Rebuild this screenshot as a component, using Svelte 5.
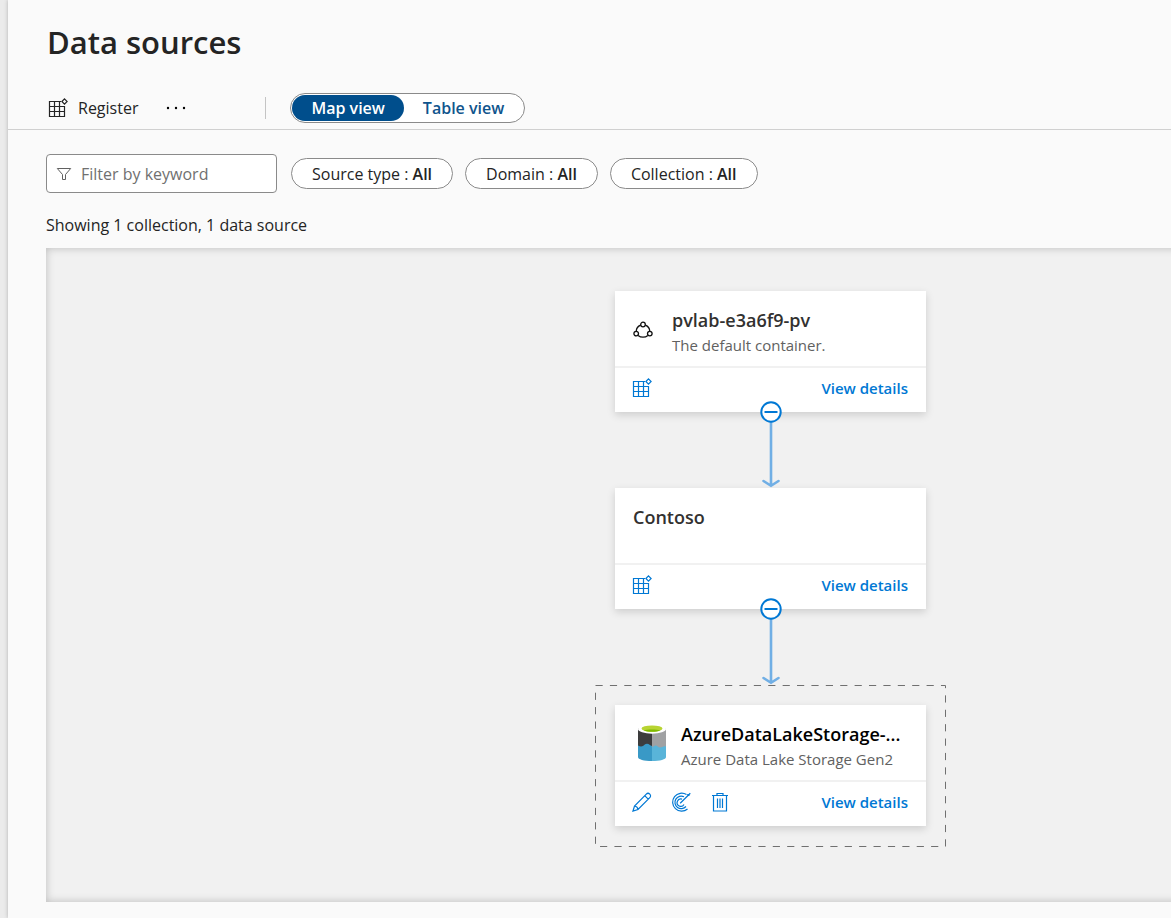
<script>
  let view = $state('map');
  let keyword = $state('');
  const filters = ['Source type', 'Domain', 'Collection'];
</script>

{#snippet gridIcon()}
  <svg class="icon" viewBox="0 0 20 20" width="20" height="20" aria-hidden="true">
    <path d="M13 3.500H1.500v15h15V8M6.500 3.500v15M11.500 3.500v15M1.500 8.500h15M1.500 13.500h15" />
    <path d="M16.500 .9l2.600 2.600-2.600 2.600-2.600-2.600z" />
  </svg>
{/snippet}

{#snippet connector()}
  <div class="connector">
    <svg class="arrow" viewBox="0 0 22 77" width="22" height="77" aria-hidden="true">
      <path d="M11 8v65M3.500 69l7.500 4.800 7.500-4.800" />
    </svg>
    <button class="collapse" aria-label="Collapse">
      <svg viewBox="0 0 22 22" width="22" height="22" aria-hidden="true">
        <circle cx="11" cy="11" r="9.700" />
        <path d="M4.500 11h13" />
      </svg>
    </button>
  </div>
{/snippet}

<main>
  <h1>Data sources</h1>

  <div class="toolbar">
    <button class="register">{@render gridIcon()}<span>Register</span></button>
    <button class="more" aria-label="More">
      <svg viewBox="0 0 20 4" width="20" height="4" aria-hidden="true">
        <circle cx="2" cy="2" r="1.200" /><circle cx="10" cy="2" r="1.200" /><circle cx="18" cy="2" r="1.200" />
      </svg>
    </button>
    <span class="separator"></span>
    <div class="switch">
      <button class:active={view === 'map'} onclick={() => (view = 'map')}>Map view</button>
      <button class:active={view === 'table'} onclick={() => (view = 'table')}>Table view</button>
    </div>
  </div>

  <div class="filters">
    <label class="search">
      <svg viewBox="0 0 16 16" width="16" height="16" aria-hidden="true">
        <path d="M1.300 2.500h13.400L9.500 8.500v5h-3v-5z" />
      </svg>
      <input type="text" placeholder="Filter by keyword" aria-label="Filter by keyword" bind:value={keyword} />
    </label>
    <div class="pills">
      {#each filters as name}
        <button class="pill">{name} : <b>All</b></button>
      {/each}
    </div>
  </div>

  <p class="summary">Showing 1 collection, 1 data source</p>

  <section class="canvas">
    <div class="tree">
      <article class="card">
        <header>
          <svg class="container-icon" viewBox="0 0 20 18" width="20" height="18" aria-hidden="true">
            <circle cx="10" cy="3.500" r="2.300" /><circle cx="3.200" cy="12.600" r="2.300" /><circle cx="16.800" cy="12.600" r="2.300" />
            <path d="M7.600 4.100C5 5.200 3.400 7.500 3.300 10M12.400 4.100C15 5.200 16.600 7.500 16.700 10M5.100 14.400c2.800 2.400 7 2.400 9.800 0" />
          </svg>
          <div class="names"><h2>pvlab-e3a6f9-pv</h2><p>The default container.</p></div>
        </header>
        <footer>
          <button aria-label="Register">{@render gridIcon()}</button>
          <a href="#details">View details</a>
        </footer>
      </article>
      {@render connector()}
      <article class="card">
        <header><div class="names"><h2>Contoso</h2></div></header>
        <footer>
          <button aria-label="Register">{@render gridIcon()}</button>
          <a href="#details">View details</a>
        </footer>
      </article>
      {@render connector()}
      <div class="group">
        <svg class="outline" aria-hidden="true"><rect x="0.500" y="0.500" width="350" height="161" pathLength="142" /></svg>
        <article class="card source">
          <header>
            <svg viewBox="0 0 28 36" width="28" height="36" aria-hidden="true">
              <path fill="#3c3c3d" d="M0 3.500h14V24H0z" />
              <path fill="#a0a1a3" d="M14 3.500h14V24H14z" />
              <path fill="#3999c6" d="M0 20.500c2 1 3.500 1.200 5 .4 1.500-.7 2-2.100 4-2.100 2.200 0 3 2 5 2.200V36C6 36 0 34.500 0 32z" />
              <path fill="#59b4d9" d="M14 22c1.500 0 2-1.500 3.500-1.500 2 0 2.500 2 4.500 2 2.500 0 3.500-2 6-1V32c0 2.500-6 4-14 4z" />
              <ellipse cx="14" cy="4" rx="14" ry="4.700" fill="#fff" />
              <ellipse cx="14" cy="3.600" rx="10.500" ry="3.200" fill="#b8d432" />
              <path fill="#7fba00" d="M5.500 5.500C10 4.200 18 4.200 22.500 5.500 19 7.300 9 7.300 5.500 5.500z" />
            </svg>
            <div class="names"><h2>AzureDataLakeStorage-...</h2><p>Azure Data Lake Storage Gen2</p></div>
          </header>
          <footer>
            <button aria-label="Edit">
              <svg class="icon" viewBox="0 0 20 20" width="20" height="20" aria-hidden="true">
                <path d="M1 19l1.500-5L14.300 2.100c2.300-2.300 5.800 1.200 3.500 3.500L6 17.500zM2.500 14c2 .2 3.300 1.500 3.500 3.500M12.700 3.700l3.500 3.500" />
              </svg>
            </button>
            <button aria-label="Scan">
              <svg class="icon" viewBox="0 0 20 20" width="20" height="20" aria-hidden="true">
                <path d="M15.500 2.600A9 9 0 1 0 16.500 17M13 4.700A6.300 6.300 0 1 0 15 14.500M11 7.100A3.700 3.700 0 1 0 13 12.500M9.200 11.200L19.300 1.200M16.800 2v1.500h1.700" />
              </svg>
            </button>
            <button aria-label="Delete">
              <svg class="icon" viewBox="0 0 20 20" width="20" height="20" aria-hidden="true">
                <path d="M2 3.500h16M7 3.500v-2h6v2M3.500 3.500v15.500h13V3.500M7.500 6.500v9.500M10 6.500v9.500M12.500 6.500v9.500" />
              </svg>
            </button>
            <a href="#details">View details</a>
          </footer>
        </article>
      </div>
    </div>
  </section>
</main>

<style>
  :global(body) {
    margin: 0;
    background: #ebebeb;
    font-family: "Segoe UI", "Open Sans", "Noto Sans", sans-serif;
    font-size: 16px;
    color: #242424;
  }
  main {
    box-sizing: border-box;
    min-height: 100vh;
    margin-left: 8px;
    padding-bottom: 16px;
    display: flex;
    flex-direction: column;
    background: #fafafa;
    box-shadow: 0 0 4px #00000040;
    overflow: hidden;
  }
  h1, h2, p { margin: 0; font-weight: 400; }
  button {
    font: inherit;
    color: inherit;
    padding: 0;
    border: 0;
    background: none;
    cursor: pointer;
  }
  svg { display: block; flex: none; }
  .icon { fill: none; stroke: currentColor; stroke-width: 1.2; }

  h1 {
    padding: 20px 0 0 39px;
    font-size: 31px;
    line-height: 44px;
    font-weight: 600;
  }
  .toolbar {
    display: flex;
    align-items: center;
    height: 43px;
    margin-top: 22px;
    padding-left: 40px;
    border-bottom: 1px solid #d0d0d0;
  }
  .register { display: flex; align-items: center; gap: 10px; }
  .more { margin-left: 28px; }
  .separator { width: 1px; height: 22px; margin: 0 24px 0 79px; background: #c4c4c4; }
  .switch {
    display: flex;
    box-sizing: border-box;
    height: 30px;
    padding: 1px;
    border: 1px solid #8a8a8a;
    border-radius: 15px;
    background: #fff;
  }
  .switch button {
    padding: 0 19px;
    border-radius: 13px;
    font-weight: 600;
    line-height: 26px;
    color: #0f548c;
  }
  .switch .active { background: #004e8c; color: #fff; }

  .filters { display: flex; align-items: center; gap: 14px; padding: 24px 0 0 38px; }
  .search {
    display: flex;
    align-items: center;
    gap: 9px;
    box-sizing: border-box;
    width: 231px;
    height: 39px;
    padding: 0 9px;
    border: 1px solid #8a8a8a;
    border-radius: 4px;
    background: #fff;
  }
  .search svg { fill: none; stroke: #616161; }
  .search input {
    flex: 1;
    min-width: 0;
    padding: 0;
    border: 0;
    outline: 0;
    background: none;
    font: inherit;
  }
  .search input::placeholder { color: #707070; opacity: 1; }
  .pills { display: flex; gap: 12px; }
  .pill {
    height: 31px;
    padding: 0 20px;
    border: 1px solid #8a8a8a;
    border-radius: 16px;
    background: #fff;
  }
  .pill b { font-weight: 600; }
  .summary { padding: 20px 0 0 38px; line-height: 24px; }

  .canvas {
    position: relative;
    flex: 1;
    min-height: 640px;
    margin: 11px -20px 0 38px;
    background: #f1f1f1;
    box-shadow: inset 0 0 8px #0000003a;
  }
  .tree {
    position: absolute;
    left: 549px;
    top: 43px;
    width: 351px;
    display: flex;
    flex-direction: column;
    align-items: center;
  }
  .card {
    width: 311px;
    background: #fff;
    box-shadow: 0 3px 8px #00000026;
  }
  .card header {
    box-sizing: border-box;
    height: 75px;
    padding: 17px 18px 0;
    display: flex;
    align-items: flex-start;
    gap: 19px;
  }
  .container-icon { margin-top: 13px; fill: none; stroke: #111; stroke-width: 1.3; }
  h2 {
    font-size: 18px;
    line-height: 24px;
    font-weight: 600;
    color: #323130;
    white-space: nowrap;
  }
  .names p { font-size: 15px; line-height: 26px; color: #616161; }
  .card footer {
    box-sizing: border-box;
    height: 46px;
    padding: 0 18px 5px 17px;
    display: flex;
    align-items: center;
    gap: 19px;
    border-top: 2px solid #f1f1f1;
    color: #0078d4;
  }
  .card a {
    margin-left: auto;
    font-size: 15px;
    line-height: 20px;
    font-weight: 600;
    color: inherit;
    text-decoration: none;
  }
  .connector { position: relative; width: 21px; height: 76px; }
  .arrow { fill: none; stroke: #71afe5; stroke-width: 2.600; stroke-linecap: round; }
  .collapse { position: absolute; left: 0; top: -11px; }
  .collapse svg { fill: #fff; stroke: #0078d4; stroke-width: 2; }
  .group { position: relative; padding: 20px; }
  .outline {
    position: absolute;
    left: 0;
    top: 0;
    width: 351px;
    height: 162px;
    fill: none;
    stroke: #707070;
    stroke-dasharray: 1 1;
  }
  .source header { padding: 17px 0 0 23px; gap: 15px; }
  .source header svg { margin-top: 3px; }
  .source h2 { color: #000; }
</style>
